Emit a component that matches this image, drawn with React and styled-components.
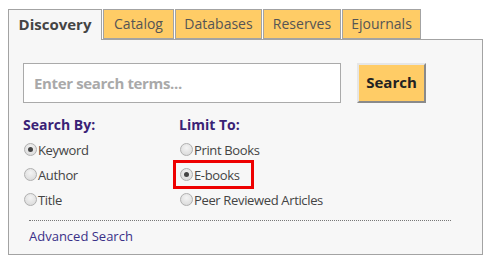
import React from "react";
import styled, { createGlobalStyle } from "styled-components";

const GlobalStyle = createGlobalStyle`
  html, body {
    margin: 0;
    padding: 0;
    background: #ffffff;
  }
  body {
    font-family: "Open Sans", "Noto Sans", sans-serif;
    color: #444444;
  }
`;

const Wrapper = styled.div`
  padding: 9px 0 0 8px;
  width: 475px;
`;

const Tabs = styled.div`
  display: flex;
  gap: 1px;
  position: relative;
  z-index: 1;
  margin-bottom: -1px;
`;

const Tab = styled.div`
  box-sizing: border-box;
  height: ${(p) => (p.$active ? 31 : 30)}px;
  width: ${(p) => p.$w}px;
  display: flex;
  align-items: center;
  justify-content: center;
  border: 1px solid #a3a3a3;
  border-bottom: ${(p) => (p.$active ? "none" : "1px solid #a3a3a3")};
  background: ${(p) => (p.$active ? "#f7f7f7" : "#ffcc66")};
  font-size: ${(p) => (p.$active ? 15 : 14)}px;
  font-weight: ${(p) => (p.$active ? 700 : 400)};
  color: ${(p) => (p.$active ? "#444" : "#555")};
  padding-bottom: 2px;
`;

const Panel = styled.div`
  box-sizing: border-box;
  height: 216px;
  border: 1px solid #a3a3a3;
  background: #f7f7f7;
  padding: 23px 14px 0 14px;
`;

const SearchRow = styled.div`
  display: flex;
  gap: 16px;
`;

const Input = styled.input`
  box-sizing: border-box;
  width: 318px;
  height: 40px;
  border: 1px solid #aaaaaa;
  background: #fff;
  padding: 0 10px;
  font-family: inherit;
  font-size: 15px;
  font-weight: 700;
  letter-spacing: -0.35px;
  outline: none;
  &::placeholder {
    color: #a9a9a9;
  }
`;

const Button = styled.button`
  box-sizing: border-box;
  width: 69px;
  height: 40px;
  background: #ffcc66;
  border: 2px solid;
  border-color: #e6e6e6 #8a8a8a #8a8a8a #e6e6e6;
  font-family: inherit;
  font-size: 15px;
  font-weight: 700;
  color: #222;
  padding: 0 0 2px;
`;

const Columns = styled.div`
  display: grid;
  grid-template-columns: 156px auto;
  margin-top: 12px;
`;

const Column = styled.div`
  display: flex;
  flex-direction: column;
`;

const Heading = styled.div`
  font-size: 14px;
  font-weight: 700;
  color: #3a2275;
  height: 20px;
  line-height: 20px;
  margin-bottom: 2px;
`;

const Option = styled.label`
  display: flex;
  align-items: center;
  height: 25px;
  font-size: 13px;
  letter-spacing: -0.35px;
  color: #444;
  position: relative;
`;

const Highlight = styled.div`
  position: absolute;
  left: -6px;
  top: -2px;
  width: 81px;
  height: 29px;
  box-sizing: border-box;
  border: 3px solid #ee0000;
`;

const Radio = styled.span`
  box-sizing: border-box;
  width: 13px;
  height: 13px;
  border-radius: 50%;
  border: 1px solid #b0b0b0;
  background: radial-gradient(circle at 50% 35%, #f4f4f4, #d6d6d6);
  display: flex;
  align-items: center;
  justify-content: center;
  margin: 0 1px;
  &::after {
    content: "";
    display: ${(p) => (p.$checked ? "block" : "none")};
    width: 5px;
    height: 5px;
    border-radius: 50%;
    background: #444;
  }
`;

const Divider = styled.div`
  margin: 8px 17px 0 6px;
  border-top: 1px dotted #777;
`;

const AdvancedLink = styled.a`
  display: block;
  margin: 6px 0 0 6px;
  font-size: 13px;
  color: #3a3088;
  text-decoration: none;
`;

const searchBy = [
  { label: "Keyword", checked: true },
  { label: "Author" },
  { label: "Title" },
];

const limitTo = [
  { label: "Print Books" },
  { label: "E-books", checked: true, mark: true },
  { label: "Peer Reviewed Articles" },
];

const tabs = [
  { label: "Discovery", w: 94, active: true },
  { label: "Catalog", w: 71 },
  { label: "Databases", w: 87 },
  { label: "Reserves", w: 78 },
  { label: "Ejournals", w: 79 },
];

export default function App() {
  return (
    <>
      <GlobalStyle />
      <Wrapper>
        <Tabs>
          {tabs.map((t) => (
            <Tab key={t.label} $active={t.active} $w={t.w}>
              {t.label}
            </Tab>
          ))}
        </Tabs>
        <Panel>
          <SearchRow>
            <Input placeholder="Enter search terms..." />
            <Button>Search</Button>
          </SearchRow>
          <Columns>
            <Column>
              <Heading>Search By:</Heading>
              {searchBy.map((o) => (
                <Option key={o.label}>
                  <Radio $checked={o.checked} />
                  {o.label}
                </Option>
              ))}
            </Column>
            <Column>
              <Heading>Limit To:</Heading>
              {limitTo.map((o) => (
                <Option key={o.label}>
                  {o.mark && <Highlight />}
                  <Radio $checked={o.checked} />
                  {o.label}
                </Option>
              ))}
            </Column>
          </Columns>
          <Divider />
          <AdvancedLink href="#">Advanced Search</AdvancedLink>
        </Panel>
      </Wrapper>
    </>
  );
}
